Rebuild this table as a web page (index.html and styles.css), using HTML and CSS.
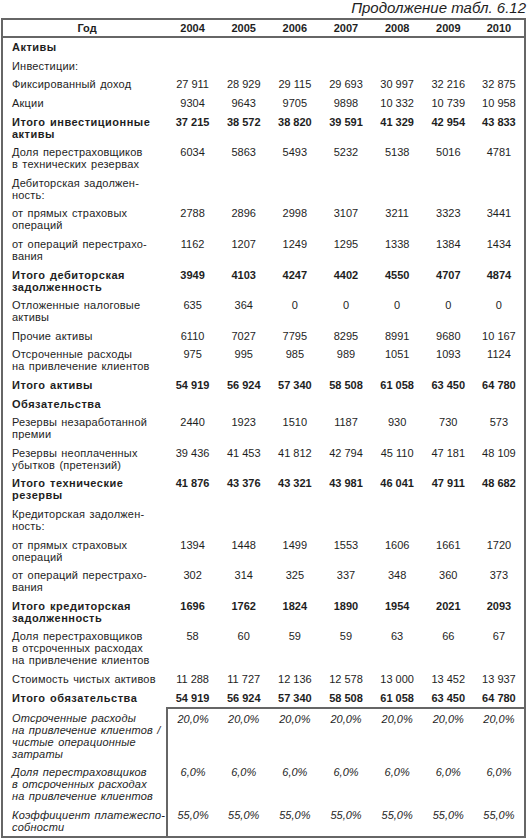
FILE: index.html
```html
<!DOCTYPE html>
<html lang="ru">
<head>
    <meta charset="UTF-8">
    <title>Продолжение табл. 6.12</title>
    <link rel="stylesheet" href="styles.css">
</head>
<body>
    <div class="page">
        <div class="caption">Продолжение табл. 6.12</div>

        <table class="data">
            <colgroup>
                <col class="col-name">
                <col><col><col><col><col><col><col>
            </colgroup>
            <thead>
                <tr>
                    <th class="name">Год</th>
                    <th>2004</th><th>2005</th><th>2006</th><th>2007</th><th>2008</th><th>2009</th><th>2010</th>
                </tr>
            </thead>
            <tbody>
                <tr class="bold"><td class="name">Активы</td><td></td><td></td><td></td><td></td><td></td><td></td><td></td></tr>
                <tr><td class="name">Инвестиции:</td><td></td><td></td><td></td><td></td><td></td><td></td><td></td></tr>
                <tr><td class="name">Фиксированный доход</td><td>27 911</td><td>28 929</td><td>29 115</td><td>29 693</td><td>30 997</td><td>32 216</td><td>32 875</td></tr>
                <tr><td class="name">Акции</td><td>9304</td><td>9643</td><td>9705</td><td>9898</td><td>10 332</td><td>10 739</td><td>10 958</td></tr>
                <tr class="bold"><td class="name">Итого инвестиционные<br>активы</td><td>37 215</td><td>38 572</td><td>38 820</td><td>39 591</td><td>41 329</td><td>42 954</td><td>43 833</td></tr>
                <tr><td class="name">Доля перестраховщиков<br>в технических резервах</td><td>6034</td><td>5863</td><td>5493</td><td>5232</td><td>5138</td><td>5016</td><td>4781</td></tr>
                <tr><td class="name">Дебиторская задолжен-<br>ность:</td><td></td><td></td><td></td><td></td><td></td><td></td><td></td></tr>
                <tr><td class="name">от прямых страховых<br>операций</td><td>2788</td><td>2896</td><td>2998</td><td>3107</td><td>3211</td><td>3323</td><td>3441</td></tr>
                <tr><td class="name">от операций перестрахо-<br>вания</td><td>1162</td><td>1207</td><td>1249</td><td>1295</td><td>1338</td><td>1384</td><td>1434</td></tr>
                <tr class="bold"><td class="name">Итого дебиторская<br>задолженность</td><td>3949</td><td>4103</td><td>4247</td><td>4402</td><td>4550</td><td>4707</td><td>4874</td></tr>
                <tr><td class="name">Отложенные налоговые<br>активы</td><td>635</td><td>364</td><td>0</td><td>0</td><td>0</td><td>0</td><td>0</td></tr>
                <tr><td class="name">Прочие активы</td><td>6110</td><td>7027</td><td>7795</td><td>8295</td><td>8991</td><td>9680</td><td>10 167</td></tr>
                <tr><td class="name">Отсроченные расходы<br>на привлечение клиентов</td><td>975</td><td>995</td><td>985</td><td>989</td><td>1051</td><td>1093</td><td>1124</td></tr>
                <tr class="bold"><td class="name">Итого активы</td><td>54 919</td><td>56 924</td><td>57 340</td><td>58 508</td><td>61 058</td><td>63 450</td><td>64 780</td></tr>
                <tr class="bold"><td class="name">Обязательства</td><td></td><td></td><td></td><td></td><td></td><td></td><td></td></tr>
                <tr><td class="name">Резервы незаработанной<br>премии</td><td>2440</td><td>1923</td><td>1510</td><td>1187</td><td>930</td><td>730</td><td>573</td></tr>
                <tr><td class="name">Резервы неоплаченных<br>убытков (претензий)</td><td>39 436</td><td>41 453</td><td>41 812</td><td>42 794</td><td>45 110</td><td>47 181</td><td>48 109</td></tr>
                <tr class="bold"><td class="name">Итого технические<br>резервы</td><td>41 876</td><td>43 376</td><td>43 321</td><td>43 981</td><td>46 041</td><td>47 911</td><td>48 682</td></tr>
                <tr><td class="name">Кредиторская задолжен-<br>ность:</td><td></td><td></td><td></td><td></td><td></td><td></td><td></td></tr>
                <tr><td class="name">от прямых страховых<br>операций</td><td>1394</td><td>1448</td><td>1499</td><td>1553</td><td>1606</td><td>1661</td><td>1720</td></tr>
                <tr><td class="name">от операций перестрахо-<br>вания</td><td>302</td><td>314</td><td>325</td><td>337</td><td>348</td><td>360</td><td>373</td></tr>
                <tr class="bold"><td class="name">Итого кредиторская<br>задолженность</td><td>1696</td><td>1762</td><td>1824</td><td>1890</td><td>1954</td><td>2021</td><td>2093</td></tr>
                <tr><td class="name">Доля перестраховщиков<br>в отсроченных расходах<br>на привлечение клиентов</td><td>58</td><td>60</td><td>59</td><td>59</td><td>63</td><td>66</td><td>67</td></tr>
                <tr><td class="name">Стоимость чистых активов</td><td>11 288</td><td>11 727</td><td>12 136</td><td>12 578</td><td>13 000</td><td>13 452</td><td>13 937</td></tr>
                <tr class="bold"><td class="name">Итого обязательства</td><td>54 919</td><td>56 924</td><td>57 340</td><td>58 508</td><td>61 058</td><td>63 450</td><td>64 780</td></tr>

                <!-- ratios block, boxed off on the right -->
                <tr class="ratio first"><td class="name">Отсроченные расходы<br>на привлечение клиентов /<br>чистые операционные<br>затраты</td><td>20,0%</td><td>20,0%</td><td>20,0%</td><td>20,0%</td><td>20,0%</td><td>20,0%</td><td>20,0%</td></tr>
                <tr class="ratio"><td class="name">Доля перестраховщиков<br>в отсроченных расходах<br>на привлечение клиентов</td><td>6,0%</td><td>6,0%</td><td>6,0%</td><td>6,0%</td><td>6,0%</td><td>6,0%</td><td>6,0%</td></tr>
                <tr class="ratio"><td class="name">Коэффициент платежеспо-<br>собности</td><td>55,0%</td><td>55,0%</td><td>55,0%</td><td>55,0%</td><td>55,0%</td><td>55,0%</td><td>55,0%</td></tr>
            </tbody>
        </table>
    </div>
</body>
</html>
```

FILE: styles.css
```css
/* Page */
body {
    margin: 0;
    background-color: #fff;
    color: #1e1e1e;
    font-family: "Liberation Sans", Arial, sans-serif;
}

.page {
    padding: 0 2px 0 1px;
}

/* Caption above the table */
.caption {
    height: 18px;
    font-size: 15px;
    line-height: 16px;
    font-style: italic;
    text-align: right;
}

/* Main table */
.data {
    width: 100%;
    border-collapse: collapse;
    table-layout: fixed;
    border: 2px solid #666;
    font-size: 11px;
    line-height: 12px;
}

.col-name {
    width: 165px;
}

.data th {
    height: 16px;
    padding: 0;
    font-weight: bold;
    text-align: center;
    border-bottom: 2px solid #666;
}

.data td {
    padding: 3.3px 0;
    text-align: center;
    vertical-align: top;
    white-space: nowrap;
}

.data td.name {
    padding-left: 9px;
    text-align: left;
    letter-spacing: 0.2px;
    word-spacing: 1px;
}

.bold td.name {
    letter-spacing: 0.5px;
}

.data th.name {
    padding-left: 4px;
}

.bold td {
    font-weight: bold;
}

/* Ratios block */
.ratio td {
    font-style: italic;
}

.ratio td.name {
    border-right: 2px solid #666;
}

.ratio.first td {
    padding-top: 4px;
}

.ratio.first td + td {
    border-top: 2px solid #666;
}
```
